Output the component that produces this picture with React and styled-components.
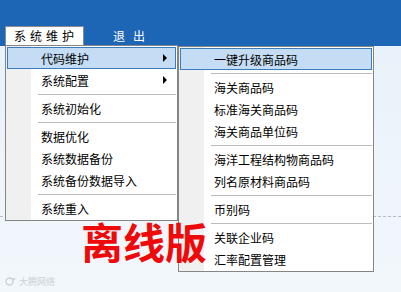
import React from 'react'
import styled, { createGlobalStyle } from 'styled-components';

const GlobalStyle = createGlobalStyle`
  html, body {
    margin: 0;
    padding: 0;
  }
  body {
    font-family: "Noto Sans CJK SC", "Noto Sans", sans-serif;
    font-size: 12px;
    color: #000;
  }
`;

const mainItems = [
  { label: '代码维护', sub: true, active: true },
  { label: '系统配置', sub: true },
  '-',
  { label: '系统初始化' },
  '-',
  { label: '数据优化' },
  { label: '系统数据备份' },
  { label: '系统备份数据导入' },
  '-',
  { label: '系统重入' },
];

const codeItems = [
  { label: '一键升级商品码', active: true },
  '-',
  { label: '海关商品码' },
  { label: '标准海关商品码' },
  { label: '海关商品单位码' },
  '-',
  { label: '海洋工程结构物商品码' },
  { label: '列名原材料商品码' },
  '-',
  { label: '币别码' },
  '-',
  { label: '关联企业码' },
  { label: '汇率配置管理' },
];

function MenuList({ items }) {
  return items.map((item, i) =>
    item === '-'
      ? <Separator key={i} />
      : (
        <Item key={i} $active={item.active}>
          <span>{item.label}</span>
          {item.sub && <Arrow />}
        </Item>
      )
  );
}

function App() {
  return (
    <Screen>
      <GlobalStyle />
      <TopBar>
        <MenuTab $active>系统维护</MenuTab>
        <MenuTab>退出</MenuTab>
      </TopBar>
      <Content>
        <DashedRule />
        <Watermark>
          <svg width="11" height="9" viewBox="0 0 11 9">
            <circle cx="4.5" cy="4.5" r="3.5" fill="none" stroke="#c9d2da" strokeWidth="1.4" />
            <circle cx="9" cy="2" r="1.3" fill="#c9d2da" />
          </svg>
          <span>大腾网络</span>
        </Watermark>
      </Content>

      <Dropdown $top={45} $left={5} $width={173}>
        <MenuList items={mainItems} />
      </Dropdown>
      <Dropdown $top={46} $left={178} $width={196}>
        <MenuList items={codeItems} />
      </Dropdown>

      <Stamp>离线版</Stamp>
    </Screen>
  )
}

const Screen = styled.div`
  position: relative;
  width: 401px;
  height: 292px;
  overflow: hidden;
  display: flex;
  flex-direction: column;
  background: linear-gradient(to bottom, #e7f0f9 0%, #eef5fb 60%, #f2f7fc 100%);
`;

const TopBar = styled.header`
  height: 46px;
  flex: none;
  box-sizing: border-box;
  padding-left: 5px;
  display: flex;
  align-items: flex-end;
  background: #1c66b5;
`;

const MenuTab = styled.div`
  box-sizing: border-box;
  height: 20px;
  line-height: 18px;
  font-size: 12px;
  white-space: nowrap;
  ${({ $active }) => $active ? `
    width: 79px;
    padding-left: 8px;
    letter-spacing: 4px;
    color: #000;
    background: #fff;
    border: 1px solid #8b8b8b;
    border-bottom: none;
  ` : `
    margin-left: 29px;
    letter-spacing: 8px;
    color: #fff;
    line-height: 20px;
  `}
`;

const Content = styled.main`
  flex: 1;
  display: flex;
  flex-direction: column;
`;

const DashedRule = styled.div`
  margin-top: 170px;
  border-top: 1px dashed #b4bcc5;
`;

const Watermark = styled.div`
  margin-top: 58px;
  padding-left: 5px;
  display: flex;
  align-items: center;
  gap: 3px;
  font-size: 9px;
  color: #c9d2da;
`;

const Dropdown = styled.nav`
  position: absolute;
  top: ${({ $top }) => $top}px;
  left: ${({ $left }) => $left}px;
  width: ${({ $width }) => $width}px;
  box-sizing: border-box;
  padding: 1px 0;
  border: 1px solid #858585;
  background: linear-gradient(to right, #f0f0f0 0, #f0f0f0 25px, #fff 25px);
  z-index: 2;
`;

const Item = styled.div`
  box-sizing: border-box;
  height: 22px;
  margin: 0 1px;
  padding: 0 8px 0 33px;
  display: flex;
  align-items: center;
  white-space: nowrap;
  border: 1px solid ${({ $active }) => $active ? '#3a7cbc' : 'transparent'};
  background: ${({ $active }) => $active ? '#c5ddf4' : 'transparent'};
`;

const Arrow = styled.i`
  margin-left: auto;
  width: 0;
  height: 0;
  border-left: 4px solid #000;
  border-top: 4px solid transparent;
  border-bottom: 4px solid transparent;
`;

const Separator = styled.div`
  height: 1px;
  margin: 3px 1px 2px 32px;
  background: #bcbcbc;
`;

const Stamp = styled.div`
  position: absolute;
  left: 81px;
  top: 220px;
  z-index: 3;
  font-size: 42px;
  line-height: 42px;
  font-weight: 700;
  color: #ee0a0a;
  white-space: nowrap;
  pointer-events: none;
`;

export default App;
